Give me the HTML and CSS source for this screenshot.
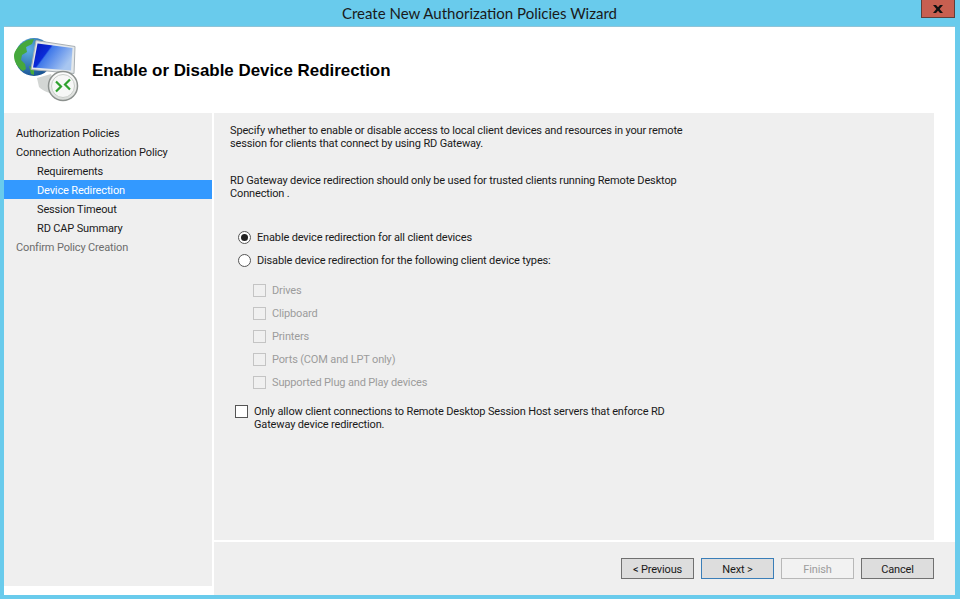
FILE: index.html
```html
<!DOCTYPE html>
<html lang="en">
<head>
<meta charset="utf-8">
<title>Create New Authorization Policies Wizard</title>
<link rel="stylesheet" href="styles.css">
</head>
<body>
<div class="window">
  <header class="titlebar">
    <div class="title">Create New Authorization Policies Wizard</div>
    <div class="close"><svg width="14" height="10" viewBox="0 0 14 10"><path d="M2 1h3l2 2.200L9 1h3L8.600 5 12 9H9L7 6.800 5 9H2l3.400-4z" fill="#111"/></svg></div>
  </header>
  <div class="client">
    <div class="header">
      <svg class="logo" width="68" height="68" viewBox="12 36 68 68">
        <defs>
          <radialGradient id="globe" cx="0.35" cy="0.3" r="0.8"><stop offset="0" stop-color="#5fb0e6"/><stop offset="1" stop-color="#124a8a"/></radialGradient>
          <linearGradient id="screen" x1="0" y1="0" x2="1" y2="0.5"><stop offset="0" stop-color="#0716b8"/><stop offset="0.4" stop-color="#0a2bd8"/><stop offset="0.44" stop-color="#3f78ea"/><stop offset="1" stop-color="#a8c6f0"/></linearGradient>
          <linearGradient id="badge" x1="0" y1="0" x2="0" y2="1"><stop offset="0" stop-color="#ffffff"/><stop offset="1" stop-color="#d9dcd9"/></linearGradient>
        </defs>
        <circle cx="34" cy="57" r="19" fill="url(#globe)"/>
        <path d="M20 45c4-4 9-6 14-6l-2 5-6 3 1 5-5 3-1 5 4 4 1 5-3 2c-5-3-9-9-9-15 0-4 3-8 6-11z" fill="#46a83c"/>
        <path d="M29 66l2 8 3 1 0-7z" fill="#46a83c"/>
        <path d="M37 78l14-4 4 10 1 10c-6 0-13-3-17-7z" fill="#d3d6d4"/>
        <path d="M36 40.500l39 6-1 27-43-4z" fill="#e4e8ea" stroke="#a9b0b5" stroke-width="1"/>
        <path d="M37.500 43.500l35 4.500-1.500 22.500-38-3z" fill="url(#screen)"/>
        <circle cx="63" cy="86" r="14.500" fill="url(#badge)" stroke="#8c918e" stroke-width="1.500"/>
        <circle cx="63" cy="86" r="11.500" fill="#f6f7f6" stroke="#c8ccc8" stroke-width="1"/>
        <path d="M56 81.500l5 5-5 5" fill="none" stroke="#2ea12e" stroke-width="2.200"/>
        <path d="M70 79.500l-5 5 5 5" fill="none" stroke="#2ea12e" stroke-width="2.200"/>
      </svg>
      <h1 class="heading">Enable or Disable Device Redirection</h1>
    </div>
    <div class="body">
      <nav class="side">
        <div class="step">Authorization Policies</div>
        <div class="step">Connection Authorization Policy</div>
        <div class="step sub">Requirements</div>
        <div class="step sub active">Device Redirection</div>
        <div class="step sub">Session Timeout</div>
        <div class="step sub">RD CAP Summary</div>
        <div class="step muted">Confirm Policy Creation</div>
      </nav>
      <div class="right">
        <main class="main">
          <p class="para first">Specify whether to enable or disable access to local client devices and resources in your remote session for clients that connect by using RD Gateway.</p>
          <p class="para second">RD Gateway device redirection should only be used for trusted clients running Remote Desktop Connection .</p>
          <div class="radios">
            <label class="radio"><span class="rbox on"></span>Enable device redirection for all client devices</label>
            <label class="radio"><span class="rbox"></span>Disable device redirection for the following client device types:</label>
          </div>
          <div class="checks">
            <div class="check"><span class="cbox"></span>Drives</div>
            <div class="check"><span class="cbox"></span>Clipboard</div>
            <div class="check"><span class="cbox"></span>Printers</div>
            <div class="check"><span class="cbox"></span>Ports (COM and LPT only)</div>
            <div class="check"><span class="cbox"></span>Supported Plug and Play devices</div>
          </div>
          <div class="enforce"><span class="cbox live"></span><span class="enforce-text">Only allow client connections to Remote Desktop Session Host servers that enforce RD Gateway device redirection.</span></div>
        </main>
        <footer class="footer">
          <button class="btn" type="button">&lt; Previous</button>
          <button class="btn default" type="button">Next &gt;</button>
          <button class="btn disabled" type="button">Finish</button>
          <button class="btn cancel" type="button">Cancel</button>
        </footer>
      </div>
    </div>
  </div>
</div>
</body>
</html>
```
FILE: styles.css
```css
* { box-sizing: border-box; }
html, body { margin: 0; padding: 0; }
body { width: 960px; height: 599px; overflow: hidden; font-family: Roboto, "Liberation Sans", sans-serif; font-size: 11px; letter-spacing: -0.15px; color: #1a1a1a; }
.window { width: 960px; height: 599px; background: #69cbec; padding: 0 5px 4px 4px; display: flex; flex-direction: column; position: relative; }
.titlebar { height: 26px; flex: none; display: flex; justify-content: center; align-items: center; }
.title { font-family: Lato, sans-serif; letter-spacing: 0; font-size: 15px; color: #1a1a1a; margin-top: -1px; }
.close { position: absolute; top: 0; right: 5px; width: 34px; height: 18px; background: #c75f50; border: 1px solid #5f3f3a; border-top: 0; display: flex; align-items: center; justify-content: center; }
.client { flex: 1; background: #fff; display: flex; flex-direction: column; border-top: 1px solid #8fc4d8; min-height: 0; }
.header { height: 86px; flex: none; display: flex; align-items: center; position: relative; }
.logo { position: absolute; left: 8px; top: 9px; }
.heading { margin: 2px 0 0 88px; font-family: "Liberation Sans", sans-serif; letter-spacing: 0; font-size: 16.900px; font-weight: bold; color: #000; }
.body { flex: 1; display: flex; min-height: 0; }
.side { width: 208px; flex: none; height: 473px; background: #efefef; padding-top: 10px; margin-right: 2px; }
.step { height: 19px; line-height: 21px; padding-left: 12px; white-space: nowrap; }
.step.sub { padding-left: 33px; }
.step.active { background: #3399ff; color: #fff; }
.step.muted { color: #6d6d6d; }
.right { flex: 1; display: flex; flex-direction: column; min-width: 0; }
.main { height: 427px; width: 720px; background: #efefef; padding: 11px 16px 0; flex: none; }
.para { margin: 0; line-height: 13px; width: 460px; }
.second { margin-top: 24px; }
.radios { margin-top: 30px; padding-left: 8px; display: flex; flex-direction: column; gap: 8px; }
.radio { display: flex; align-items: center; height: 15px; }
.rbox { width: 13px; height: 13px; border: 1px solid #555; border-radius: 50%; background: #fff; margin-right: 6px; position: relative; flex: none; }
.rbox.on::after { content: ""; position: absolute; left: 2px; top: 2px; width: 7px; height: 7px; border-radius: 50%; background: #222; }
.checks { margin-top: 15px; padding-left: 23px; display: flex; flex-direction: column; gap: 8px; color: #9c9c9c; }
.check { display: flex; align-items: center; height: 15px; }
.cbox { width: 13px; height: 13px; border: 1px solid #c4c4c4; background: #f0f0f0; margin-right: 6px; flex: none; }
.cbox.live { border-color: #555; background: #fff; margin-right: 6px; margin-top: 1px; }
.enforce { margin-top: 14px; display: flex; padding-left: 5px; align-items: flex-start; }
.enforce-text { line-height: 13px; width: 445px; margin-top: 1px; }
.footer { flex: 1; margin-top: 2px; background: #efefef; display: flex; align-items: flex-start; padding: 16px 0 0 407px; gap: 7px; }
.btn { width: 73px; height: 21px; font: inherit; letter-spacing: inherit; padding: 2px 0 0; background: #dddddd; border: 1px solid #707070; color: #1a1a1a; }
.btn.default { border-color: #3a7eb8; }
.btn.disabled { background: #f2f2f2; border-color: #b8b8b8; color: #9c9c9c; }
```
